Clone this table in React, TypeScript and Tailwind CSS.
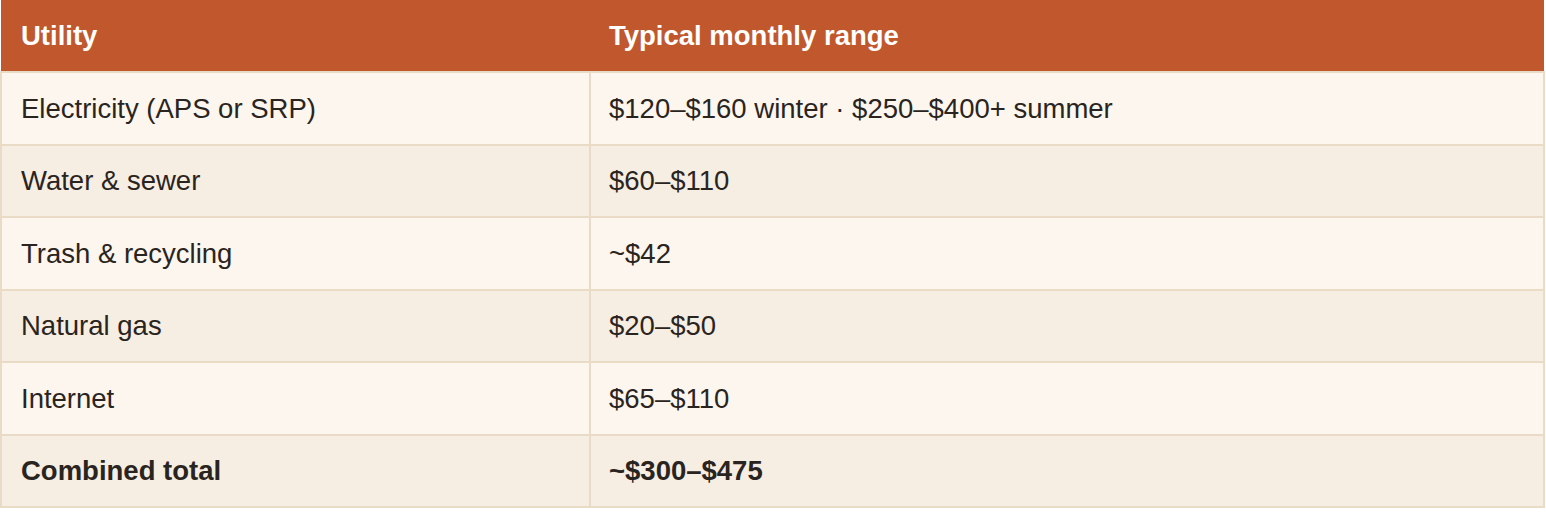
import React from "react";

const rows: [string, string][] = [
  ["Electricity (APS or SRP)", "$120–$160 winter · $250–$400+ summer"],
  ["Water & sewer", "$60–$110"],
  ["Trash & recycling", "~$42"],
  ["Natural gas", "$20–$50"],
  ["Internet", "$65–$110"],
];

export default function App() {
  return (
    <div className="w-[1546px] h-[512px] bg-white" style={{ fontFamily: '"Liberation Sans", Arial, sans-serif' }}>
      <table className="w-[1545px] border-collapse table-fixed text-[27.5px] text-[#2a2420]">
        <colgroup>
          <col className="w-[589px]" />
          <col />
        </colgroup>
        <thead>
          <tr className="bg-[#c0572d] h-[72px]">
            <th className="text-left font-bold text-white px-[20px] py-0">Utility</th>
            <th className="text-left font-bold text-white px-[19px] py-0">Typical monthly range</th>
          </tr>
        </thead>
        <tbody>
          {rows.map(([a, b], i) => (
            <tr key={a} className={`${i % 2 === 0 ? "bg-[#fcf6ef]" : "bg-[#f6ede3]"} h-[72.5px]`}>
              <td className="border-2 border-[#e9dbc5] px-[19px] py-0">{a}</td>
              <td className="border-2 border-[#e9dbc5] px-[18px] py-0">{b}</td>
            </tr>
          ))}
          <tr className="bg-[#f6ede3] h-[72.5px] font-bold">
            <td className="border-2 border-[#e9dbc5] px-[19px] py-0">Combined total</td>
            <td className="border-2 border-[#e9dbc5] px-[18px] py-0">~$300–$475</td>
          </tr>
        </tbody>
      </table>
    </div>
  );
}
